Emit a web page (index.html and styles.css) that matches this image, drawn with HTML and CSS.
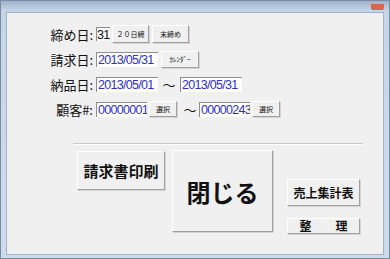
FILE: index.html
```html
<!DOCTYPE html>
<html lang="ja">
<head>
  <meta charset="UTF-8">
  <title>請求書印刷</title>
  <link rel="stylesheet" href="styles.css">
</head>
<body>
<div class="window">
  <div class="titlebar">
    <span class="close"></span>
  </div>
  <div class="client">
    <div class="form">
      <div class="row">
        <span class="label">締め日:</span>
        <span class="field day">31</span>
        <button class="btn small first">２０日締</button>
        <button class="btn small">末締め</button>
      </div>
      <div class="row">
        <span class="label">請求日:</span>
        <span class="field date blue">2013/05/31</span>
        <button class="btn small cal">ｶﾚﾝﾀﾞｰ</button>
      </div>
      <div class="row">
        <span class="label">納品日:</span>
        <span class="field date blue">2013/05/01</span>
        <span class="tilde">～</span>
        <span class="field date blue">2013/05/31</span>
      </div>
      <div class="row">
        <span class="label">顧客#:</span>
        <span class="field code blue">00000001</span>
        <button class="btn small pick">選択</button>
        <span class="tilde wide">～</span>
        <span class="field code blue">00000243</span>
        <button class="btn small pick">選択</button>
      </div>
    </div>
    <div class="rule"></div>
    <div class="actions">
      <button class="btn print">請求書印刷</button>
      <button class="btn close-btn">閉じる</button>
      <div class="side">
        <button class="btn total">売上集計表</button>
        <button class="btn tidy">整　　理</button>
      </div>
    </div>
  </div>
</div>
</body>
</html>
```

FILE: styles.css
```css
* {
  box-sizing: border-box;
}
html, body {
  margin: 0;
  padding: 0;
}
body {
  width: 390px;
  height: 259px;
  font-family: "Liberation Sans", "Noto Sans CJK JP", sans-serif;
  color: #111;
}
.window {
  height: 259px;
  display: flex;
  flex-direction: column;
  border: 1px solid #7b8ca2;
  padding: 0 5px 3px 5px;
  background: linear-gradient(#9fb2cb, #c6d6e9 10px, #cddced);
}
.titlebar {
  height: 11px;
  display: flex;
  justify-content: flex-end;
}
.close {
  width: 13px;
  height: 6px;
  margin-top: 3px;
  background: #d5664f;
  border-radius: 0 0 2px 2px;
}
.client {
  flex: 1;
  background: #f0f0f0;
  border: 1px solid #a3b2c4;
  padding-top: 12px;
}
.form {
  display: flex;
  flex-direction: column;
  gap: 7px;
}
.row {
  height: 18px;
  display: flex;
  align-items: center;
}
.label {
  width: 86px;
  margin-right: 3px;
  text-align: right;
  font-size: 13px;
  font-family: "Noto Sans CJK JP", sans-serif;
}
.field {
  height: 15px;
  background: #fff;
  border-top: 1px solid #8e8e8e;
  border-left: 1px solid #8e8e8e;
  font-size: 12.5px;
  line-height: 14px;
  letter-spacing: -0.7px;
  padding-left: 1px;
  white-space: nowrap;
  overflow: hidden;
}
.field.blue {
  color: #2f2fc8;
}
.day {
  width: 14px;
  height: 14px;
  background: #f8f8f8;
  padding-left: 0;
}
.date {
  width: 62px;
}
.code {
  width: 51px;
}
.tilde {
  width: 22px;
  text-align: center;
  font-size: 13px;
  font-family: "Noto Sans CJK JP", sans-serif;
}
.tilde.wide {
  padding-left: 4px;
}
.btn {
  margin: 0;
  padding: 0;
  font-family: "Noto Sans CJK JP", sans-serif;
  color: #111;
  background: #f0f0f0;
  border: 1px solid;
  border-color: #fff #a0a0a0 #a0a0a0 #fff;
  box-shadow: 1px 1px 0 #d4d4d4;
  white-space: nowrap;
}
.btn.small {
  width: 37px;
  height: 18px;
  margin-left: 3px;
  font-size: 7px;
}
.btn.small.first {
  margin-left: 2px;
}
.btn.small.cal {
  width: 38px;
  height: 17px;
}
.btn.small.pick {
  width: 28px;
  height: 16px;
  margin-left: 2px;
}
.rule {
  margin: 25px 0 0 66px;
  width: 290px;
  border-top: 1px solid #c9c9c9;
  border-bottom: 1px solid #fdfdfd;
}
.actions {
  display: flex;
  align-items: flex-start;
  margin: 5px 0 0 70px;
}
.print {
  width: 88px;
  height: 39px;
  margin-top: 1px;
  font-size: 15px;
  font-weight: bold;
}
.close-btn {
  width: 101px;
  height: 82px;
  margin-left: 7px;
  font-size: 24px;
  font-weight: bold;
}
.side {
  display: flex;
  flex-direction: column;
  gap: 12px;
  margin: 29px 0 0 14px;
}
.total {
  width: 73px;
  height: 27px;
  font-size: 12px;
  font-weight: bold;
}
.tidy {
  width: 73px;
  height: 16px;
  font-size: 12px;
  font-weight: bold;
  line-height: 14px;
}
```
